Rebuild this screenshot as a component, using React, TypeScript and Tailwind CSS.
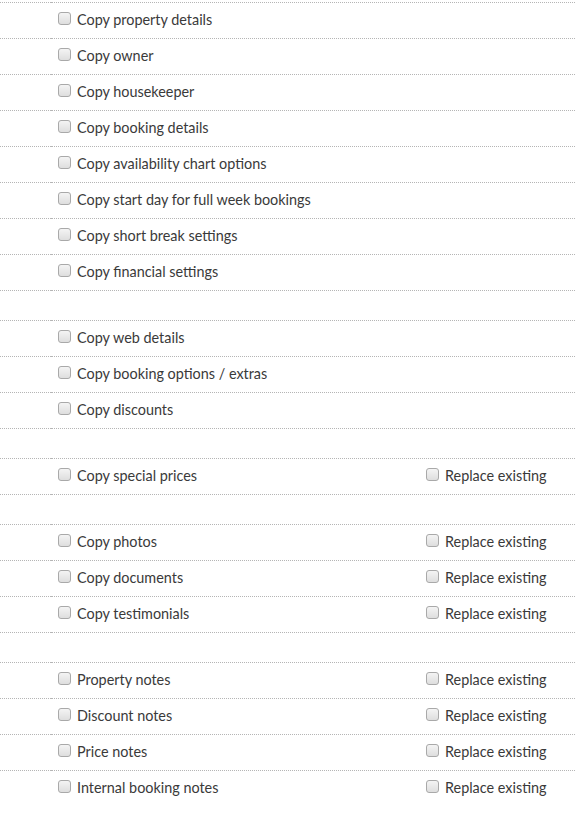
type Row =
  | { kind: "gap" }
  | { kind: "item"; label: string; replace?: boolean };

const rows: Row[] = [
  { kind: "item", label: "Copy property details" },
  { kind: "item", label: "Copy owner" },
  { kind: "item", label: "Copy housekeeper" },
  { kind: "item", label: "Copy booking details" },
  { kind: "item", label: "Copy availability chart options" },
  { kind: "item", label: "Copy start day for full week bookings" },
  { kind: "item", label: "Copy short break settings" },
  { kind: "item", label: "Copy financial settings" },
  { kind: "gap" },
  { kind: "item", label: "Copy web details" },
  { kind: "item", label: "Copy booking options / extras" },
  { kind: "item", label: "Copy discounts" },
  { kind: "gap" },
  { kind: "item", label: "Copy special prices", replace: true },
  { kind: "gap" },
  { kind: "item", label: "Copy photos", replace: true },
  { kind: "item", label: "Copy documents", replace: true },
  { kind: "item", label: "Copy testimonials", replace: true },
  { kind: "gap" },
  { kind: "item", label: "Property notes", replace: true },
  { kind: "item", label: "Discount notes", replace: true },
  { kind: "item", label: "Price notes", replace: true },
  { kind: "item", label: "Internal booking notes", replace: true },
];

function Box() {
  return (
    <span className="inline-block w-[13px] h-[13px] shrink-0 rounded-[3px] border border-[#a9a9a9] bg-gradient-to-b from-[#f4f4f4] to-[#dedede]" />
  );
}

export default function App() {
  return (
    <div
      className="w-[576px] bg-white pt-[2px] text-[14.4px] text-[#3a3a3a]"
      style={{ fontFamily: "Lato, 'Open Sans', sans-serif" }}
    >
      {rows.map((row, i) => (
        <div key={i} className={`flex ${row.kind === "gap" ? "h-[30px]" : "h-[36px]"}`}>
          <div className="w-[51px] border-t border-dotted border-[#b5b5b5]" />
          <div className="w-[524px] border-t border-dotted border-[#b5b5b5] flex items-start">
            {row.kind === "item" && (
              <>
                <label className="flex items-start gap-[6px] pl-[7px] pt-[9px] w-[375px]">
                  <Box />
                  <span className="leading-[16px]">{row.label}</span>
                </label>
                {row.replace && (
                  <label className="flex items-start gap-[6px] pt-[9px]">
                    <Box />
                    <span className="leading-[16px]">Replace existing</span>
                  </label>
                )}
              </>
            )}
          </div>
        </div>
      ))}
    </div>
  );
}
